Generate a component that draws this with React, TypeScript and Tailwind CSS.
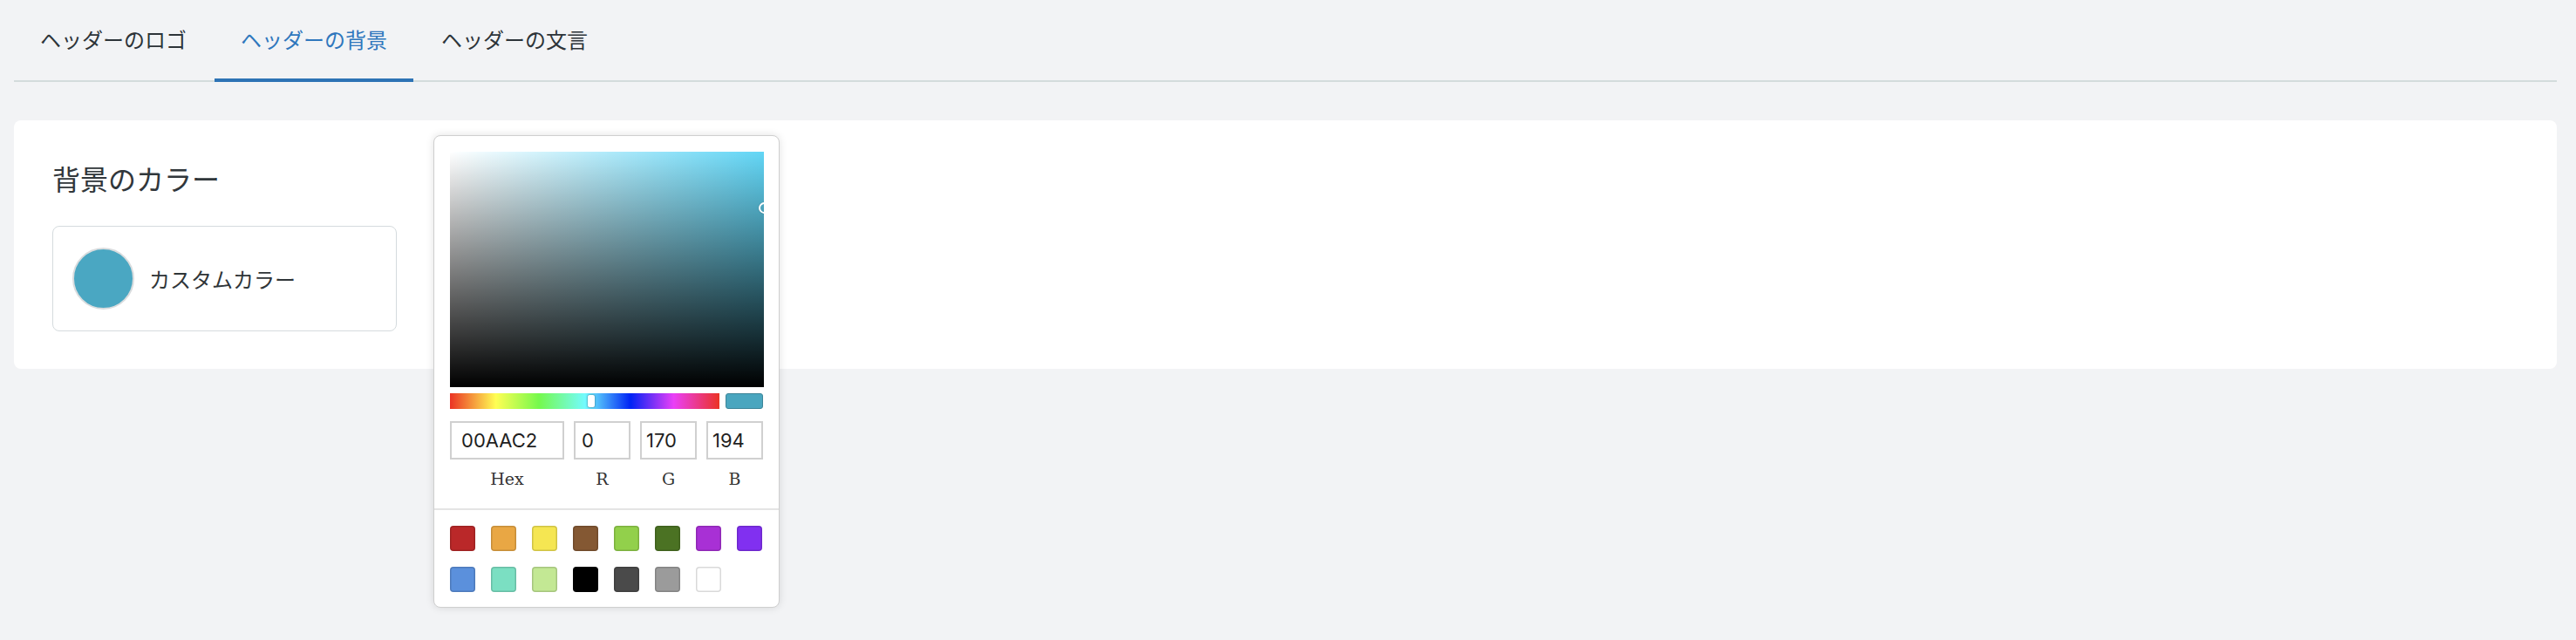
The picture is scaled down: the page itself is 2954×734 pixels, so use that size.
import React from 'react';

const jp = '[font-family:"Noto_Sans_CJK_JP","Noto_Sans",sans-serif]';

const swatches = [
  '#ba2829', '#e9a744', '#f5e652', '#845833', '#92d04b', '#4b7223', '#a830d5', '#8130f0',
  '#5b90dc', '#7bdfc2', '#c3e894', '#000000', '#4a4a4a', '#9b9b9b', '#ffffff',
];

function Tabs() {
  const tabs = ['ヘッダーのロゴ', 'ヘッダーの背景', 'ヘッダーの文言'];
  return (
    <div className="ml-[16px] mr-[22px] flex gap-[2px] border-b-2 border-[#d3dcdc]">
      {tabs.map((t, i) => (
        <div
          key={t}
          className={
            'h-[94px] -mb-[2px] px-[30px] flex items-center border-b-4 text-[24px] ' +
            (i === 1 ? 'border-[#2d73b5] text-[#2f77bd]' : 'border-transparent text-[#2d3439]')
          }
        >
          {t}
        </div>
      ))}
    </div>
  );
}

function ColorPicker() {
  return (
    <div className="absolute left-[497px] top-[155px] w-[397px] h-[542px] bg-white border border-[#cfcfcf] rounded-[8px] shadow-[0_0_10px_rgba(0,0,0,0.12)]">
      <div className="px-[18px] pt-[18px]">
        {/* saturation */}
        <div className="relative w-[360px] h-[270px] overflow-hidden bg-[#62d6f6]">
          <div className="absolute inset-0 bg-gradient-to-r from-white to-transparent" />
          <div className="absolute inset-0 bg-gradient-to-t from-black to-transparent" />
          <div className="absolute left-[354px] top-[58px] w-[13px] h-[13px] rounded-full border-2 border-white shadow-[0_0_1px_rgba(0,0,0,0.5)]" />
        </div>

        {/* hue + preview */}
        <div className="mt-[7px] flex gap-[7px]">
          <div className="relative w-[310px] h-[18px] bg-[linear-gradient(to_right,#eb3324_0%,#fffe54_17%,#75f94c_33%,#73fbfd_50%,#0023f5_67%,#ea3ff7_83%,#eb3324_100%)]">
            <div className="absolute left-[158px] top-[2px] w-[8px] h-[14px] rounded-[2px] bg-white shadow-[0_0_2px_rgba(0,0,0,0.6)]" />
          </div>
          <div className="w-[43px] h-[18px] rounded-[3px] bg-[#4aa6bf] border border-[#3d8598]" />
        </div>

        {/* inputs */}
        <div className="mt-[14px] flex gap-[11px] text-[22px] text-[#1f1f1f] [font-family:Inter,sans-serif]">
          {[
            ['00AAC2', 'Hex', 'w-[131px]', 'pl-[11px]'],
            ['0', 'R', 'w-[65px]', 'pl-[7px]'],
            ['170', 'G', 'w-[65px]', 'pl-[5px]'],
            ['194', 'B', 'w-[65px]', 'pl-[5px]'],
          ].map(([v, l, w, p]) => (
            <div key={l} className={'flex flex-col items-center ' + w}>
              <div className={'w-full h-[44px] border-2 border-[#d0d0d0] flex items-center ' + p}>{v}</div>
              <div className="mt-[10px] leading-[24px] text-[19px] text-[#333] [font-family:'DejaVu_Serif',serif]">{l}</div>
            </div>
          ))}
        </div>
      </div>

      <div className="mt-[22px] h-[1.5px] bg-[#e4e4e4]" />

      {/* preset swatches */}
      <div className="px-[18px] pt-[18px] flex flex-wrap gap-x-[18px] gap-y-[18px] w-[396px]">
        {swatches.map((c, i) => (
          <div
            key={i}
            className="w-[29px] h-[29px] rounded-[4px] shadow-[inset_0_0_0_1.5px_rgba(0,0,0,0.15)]"
            style={{ backgroundColor: c }}
          />
        ))}
      </div>
    </div>
  );
}

export default function App() {
  return (
    <div className={'relative min-h-[734px] w-full bg-[#f2f3f5] ' + jp}>
      <Tabs />
      <div className="mt-[44px] ml-[16px] mr-[22px] h-[285px] bg-white rounded-[8px] pl-[44px] pt-[46px]">
        <div className="text-[32px] leading-[40px] text-[#31373b]">背景のカラー</div>
        <div className="mt-[35px] w-[395px] h-[121px] border-[1.5px] border-[#d5dbde] rounded-[8px] flex items-center pl-[22px] gap-[17px]">
          <div className="w-[71px] h-[71px] rounded-full bg-[#4aa7c2] border-2 border-[#d9dcde]" />
          <div className="text-[24px] text-[#2f3538]">カスタムカラー</div>
        </div>
      </div>
      <ColorPicker />
    </div>
  );
}
